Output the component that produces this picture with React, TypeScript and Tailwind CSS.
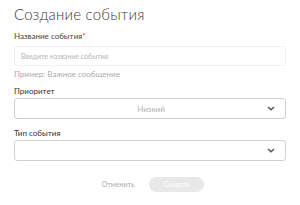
import React from "react";

const Chevron = () => (
  <svg width="8" height="5" viewBox="0 0 8 5" className="text-[#555]">
    <path d="M1 1l3 2.8L7 1" fill="none" stroke="currentColor" strokeWidth="1.5" />
  </svg>
);

export default function App() {
  return (
    <div
      className="w-[300px] h-[205px] bg-white px-[14px] pt-[4px] text-[#333]"
      style={{ fontFamily: "'Lato', 'Liberation Sans', sans-serif" }}>
      <h1 className="text-[15px] leading-[20px] font-light text-[#3a3a3a] tracking-[0.2px]">Создание события</h1>

      <label className="block mt-[7px] text-[8px] leading-[10px] text-[#444]">
        Название события<span className="text-red-500">*</span>
      </label>
      <div className="mt-[5px] h-[20px] w-[272px] rounded-[3px] border border-[#f0f0f0] flex items-center px-[6px]">
        <span className="text-[7px] text-[#b5b5b5]">Введите название события</span>
      </div>
      <div className="mt-[3px] text-[8px] leading-[10px] text-[#aaa]">Пример: Важное сообщение</div>

      <label className="block mt-[7px] text-[8px] leading-[10px] text-[#333]">Приоритет</label>
      <div className="mt-[2px] h-[21px] w-[272px] rounded-[3px] border border-[#d0d0d0] flex items-center pl-[20px] pr-[10px]">
        <span className="flex-1 text-center text-[8px] text-[#b0b0b0]">Низкий</span>
        <Chevron />
      </div>

      <label className="block mt-[9px] text-[8px] leading-[10px] text-[#333]">Тип события</label>
      <div className="mt-[2px] h-[21px] w-[272px] rounded-[3px] border border-[#d0d0d0] flex items-center justify-end pr-[10px]">
        <Chevron />
      </div>

      <div className="mt-[16px] flex items-center justify-center gap-[15px] pl-[6px]">
        <span className="text-[7px] text-[#aaa]">Отменить</span>
        <span className="h-[15px] w-[55px] rounded-full bg-[#e8e8e8] flex items-center justify-center text-[7px] text-white">
          Создать
        </span>
      </div>
    </div>
  );
}
